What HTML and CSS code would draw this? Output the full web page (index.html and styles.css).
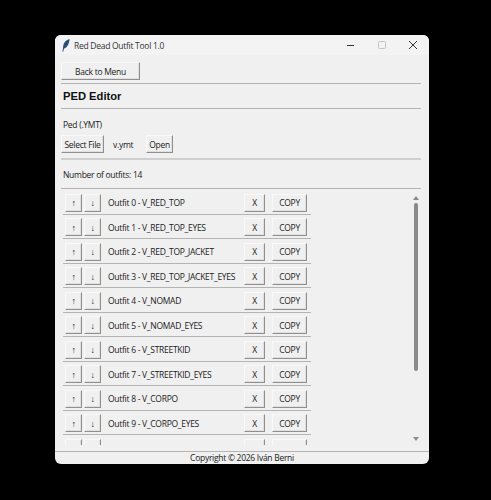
FILE: index.html
```html
<!DOCTYPE html>
<html lang="en">
<head>
    <meta charset="UTF-8">
    <title>Red Dead Outfit Tool 1.0</title>
    <link rel="stylesheet" href="styles.css">
</head>
<body>
    <div class="window">
        <div class="titlebar">
            <svg class="app-icon" width="8" height="13" viewBox="0 0 8 13">
                <path d="M7.6 0 C4 1 1.6 3.5 1.2 7 L1 9 L0.4 12.6 L1.2 12.8 L2 9.6 C5 9 7.2 5 7.6 0 Z" fill="#2c4f78"/>
            </svg>
            <span class="title">Red Dead Outfit Tool 1.0</span>
            <div class="controls">
                <svg width="10" height="10" viewBox="0 0 10 10"><path d="M1 5.5 H8" stroke="#333" stroke-width="1"/></svg>
                <svg width="10" height="10" viewBox="0 0 10 10"><rect x="1.5" y="1.5" width="7" height="7" rx="1" fill="none" stroke="#c4c4c4"/></svg>
                <svg width="10" height="10" viewBox="0 0 10 10"><path d="M1 1 L9 9 M9 1 L1 9" stroke="#333" stroke-width="1"/></svg>
            </div>
        </div>

        <div class="content">
            <div class="menu-row"><button class="btn btn-back">Back to Menu</button></div>
            <hr class="sep">
            <h1>PED Editor</h1>
            <hr class="sep">
            <div class="label">Ped (.YMT)</div>
            <div class="file-row">
                <button class="btn">Select File</button>
                <span class="filename">v.ymt</span>
                <button class="btn">Open</button>
            </div>
            <hr class="sep sep-thick">
            <div class="count">Number of outfits: 14</div>
            <hr class="sep">

            <div class="outfits">
                <div class="list">
                    <div class="row"><button class="btn btn-arrow">↑</button><button class="btn btn-arrow">↓</button><span class="name">Outfit 0 - V_RED_TOP</span><button class="btn btn-x">X</button><button class="btn btn-copy">COPY</button></div>
                    <div class="row"><button class="btn btn-arrow">↑</button><button class="btn btn-arrow">↓</button><span class="name">Outfit 1 - V_RED_TOP_EYES</span><button class="btn btn-x">X</button><button class="btn btn-copy">COPY</button></div>
                    <div class="row"><button class="btn btn-arrow">↑</button><button class="btn btn-arrow">↓</button><span class="name">Outfit 2 - V_RED_TOP_JACKET</span><button class="btn btn-x">X</button><button class="btn btn-copy">COPY</button></div>
                    <div class="row"><button class="btn btn-arrow">↑</button><button class="btn btn-arrow">↓</button><span class="name">Outfit 3 - V_RED_TOP_JACKET_EYES</span><button class="btn btn-x">X</button><button class="btn btn-copy">COPY</button></div>
                    <div class="row"><button class="btn btn-arrow">↑</button><button class="btn btn-arrow">↓</button><span class="name">Outfit 4 - V_NOMAD</span><button class="btn btn-x">X</button><button class="btn btn-copy">COPY</button></div>
                    <div class="row"><button class="btn btn-arrow">↑</button><button class="btn btn-arrow">↓</button><span class="name">Outfit 5 - V_NOMAD_EYES</span><button class="btn btn-x">X</button><button class="btn btn-copy">COPY</button></div>
                    <div class="row"><button class="btn btn-arrow">↑</button><button class="btn btn-arrow">↓</button><span class="name">Outfit 6 - V_STREETKID</span><button class="btn btn-x">X</button><button class="btn btn-copy">COPY</button></div>
                    <div class="row"><button class="btn btn-arrow">↑</button><button class="btn btn-arrow">↓</button><span class="name">Outfit 7 - V_STREETKID_EYES</span><button class="btn btn-x">X</button><button class="btn btn-copy">COPY</button></div>
                    <div class="row"><button class="btn btn-arrow">↑</button><button class="btn btn-arrow">↓</button><span class="name">Outfit 8 - V_CORPO</span><button class="btn btn-x">X</button><button class="btn btn-copy">COPY</button></div>
                    <div class="row"><button class="btn btn-arrow">↑</button><button class="btn btn-arrow">↓</button><span class="name">Outfit 9 - V_CORPO_EYES</span><button class="btn btn-x">X</button><button class="btn btn-copy">COPY</button></div>
                    <div class="row"><button class="btn btn-arrow"></button><button class="btn btn-arrow"></button><span class="name"></span><button class="btn btn-x"></button><button class="btn btn-copy"></button></div>
                </div>
                <div class="scrollbar">
                    <div class="arrow-up"></div>
                    <div class="track"><div class="thumb"></div></div>
                    <div class="arrow-down"></div>
                </div>
            </div>
        </div>

        <div class="footer">Copyright © 2026 Iván Berni</div>
    </div>
</body>
</html>
```

FILE: styles.css
```css
* {
    box-sizing: border-box;
}
body {
    margin: 0;
    height: 500px;
    overflow: hidden;
    background-color: #000;
    font-family: "Open Sans", Roboto, sans-serif;
    font-size: 8.5px;
    letter-spacing: -0.28px;
    color: #1a1a1a;
}
.window {
    width: 374px;
    height: 429px;
    margin: 35px 0 0 55px;
    background-color: #f0f0f0;
    border-radius: 6px;
    display: flex;
    flex-direction: column;
    overflow: hidden;
}
.titlebar {
    height: 20px;
    flex: none;
    display: flex;
    align-items: center;
    padding-left: 7px;
    background-color: #f3f3f3;
}
.app-icon {
    flex: none;
}
.title {
    margin-left: 4px;
    color: #333;
}
.controls {
    margin-left: auto;
    display: flex;
    gap: 21px;
    padding-right: 11px;
}
.content {
    flex: 1;
    min-height: 0;
    display: flex;
    flex-direction: column;
    padding: 7px 8px 0 6px;
}
.btn {
    flex: none;
    font: inherit;
    letter-spacing: inherit;
    color: #1a1a1a;
    padding: 0;
    background-color: #f0f0f0;
    border: 1px solid;
    border-color: #f9f9f9 #8f8f8f #8f8f8f #f9f9f9;
    box-shadow: inset -1px -1px 0 #e0e0e0;
    height: 18px;
    line-height: 15px;
    white-space: nowrap;
}
.btn-back {
    width: 79px;
}
.menu-row {
    height: 21px;
}
.sep {
    margin: 0;
    border: none;
    height: 1px;
    background-color: #b4b4b4;
    flex: none;
}
.sep-thick {
    height: 2px;
    background-color: #cfcfcf;
}
h1 {
    margin: 0;
    height: 24px;
    line-height: 25px;
    padding-left: 2px;
    font-family: "Liberation Sans", Arial, sans-serif;
    font-size: 11.2px;
    font-weight: bold;
    letter-spacing: 0;
    color: #111;
}
.label {
    height: 25px;
    padding: 8px 0 0 2px;
    line-height: 15px;
}
.file-row {
    display: flex;
    align-items: center;
    height: 24px;
    padding-bottom: 4px;
}
.file-row .btn:first-child {
    width: 43px;
}
.file-row .btn:last-child {
    width: 27px;
}
.filename {
    width: 42px;
    padding-left: 9px;
}
.count {
    height: 28px;
    line-height: 29px;
    padding-left: 2px;
}
.outfits {
    flex: 1;
    min-height: 0;
    display: flex;
    justify-content: space-between;
}
.list {
    width: 250px;
    overflow: hidden;
    margin-bottom: 6px;
    padding: 1px 0 0 2px;
}
.row {
    height: 24.5px;
    display: flex;
    align-items: center;
    padding: 2px 0 0 2px;
    border-bottom: 1px solid #b4b4b4;
}
.btn-arrow {
    width: 17px;
    margin-right: 2px;
    font-size: 9px;
}
.name {
    flex: 1;
    min-width: 0;
    padding-left: 5px;
    white-space: nowrap;
}
.btn-x {
    width: 21px;
    margin-right: 7px;
}
.btn-copy {
    width: 35px;
    margin-right: 4px;
}
.scrollbar {
    width: 14px;
    margin-right: -2px;
    padding-top: 7px;
    display: flex;
    flex-direction: column;
    align-items: center;
}
.arrow-up {
    border: 3px solid transparent;
    border-top: none;
    border-bottom: 4px solid #8a8a8a;
}
.arrow-down {
    border: 3px solid transparent;
    border-bottom: none;
    border-top: 4px solid #8a8a8a;
    margin-bottom: 10px;
}
.track {
    flex: 1;
    width: 4px;
    padding: 3px 0;
}
.thumb {
    height: 168px;
    background-color: #8a8a8a;
    border-radius: 2px;
}
.footer {
    flex: none;
    height: 13px;
    line-height: 12px;
    text-align: center;
    border-top: 1px solid #b4b4b4;
}
```
